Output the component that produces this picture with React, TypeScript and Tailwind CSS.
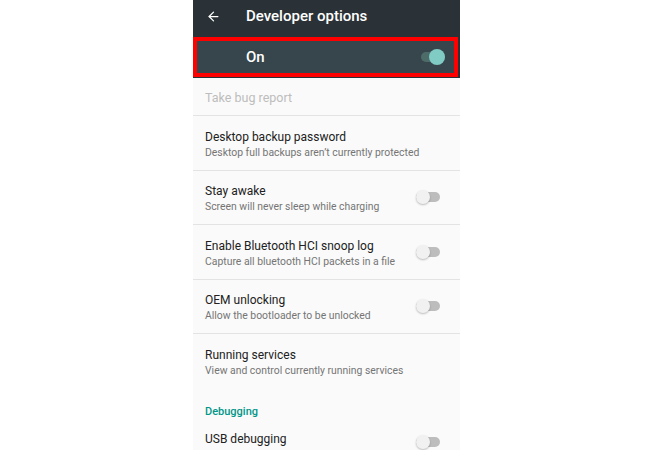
import { ArrowLeft } from "lucide-react";

type Item = {
    title: string;
    summary?: string;
    toggle?: boolean;
};

const items: Item[] = [
    { title: "Desktop backup password", summary: "Desktop full backups aren\u2019t currently protected" },
    { title: "Stay awake", summary: "Screen will never sleep while charging", toggle: true },
    { title: "Enable Bluetooth HCI snoop log", summary: "Capture all bluetooth HCI packets in a file", toggle: true },
    { title: "OEM unlocking", summary: "Allow the bootloader to be unlocked", toggle: true },
    { title: "Running services", summary: "View and control currently running services" },
];

function OffSwitch() {
    return (
        <div className="relative w-[24px] h-[14px] flex items-center">
            <div className="w-full h-[10px] rounded-full bg-[#bdbdbd]" />
            <div className="absolute left-0 top-0 w-[14px] h-[14px] rounded-full bg-[#f1f1f1] shadow-[0_1px_2px_rgba(0,0,0,0.25)]" />
        </div>
    );
}

export default function App() {
    return (
        <div className="w-[650px] h-[450px] bg-white flex overflow-hidden" style={{ fontFamily: "Roboto, 'Liberation Sans', sans-serif" }}>
            <div className="w-[267px] h-full bg-[#fafafa] ml-[193px] flex flex-col">
                {/* Toolbar */}
                <div className="h-[37px] bg-[#2a3237] flex items-center pb-[4px] shrink-0">
                    <ArrowLeft size={15} strokeWidth={2} className="text-white ml-[13px]" />
                    <span className="ml-[25px] text-white text-[15px] font-medium">Developer options</span>
                </div>

                {/* Master switch */}
                <div className="h-[41px] bg-[#2a3237] shrink-0 flex">
                    <div className="w-[265px] h-[40px] border-[4px] border-[#ff0000] bg-[#37464c] flex items-center">
                        <span className="ml-[49px] text-white text-[15px] font-medium">On</span>
                        <div className="ml-auto mr-[9px] relative w-[24px] h-[16px] flex items-center">
                            <div className="w-full h-[10px] rounded-full bg-[#4d6b69]" />
                            <div className="absolute right-0 top-0 w-[16px] h-[16px] rounded-full bg-[#80cbc4]" />
                        </div>
                    </div>
                </div>

                {/* List */}
                <div className="h-[38px] flex items-center px-[12px] pt-[3px] border-b border-[#e3e3e3] shrink-0">
                    <span className="text-[12.5px] text-[#bdbdbd]">Take bug report</span>
                </div>
                {items.map((it, i) => (
                    <div
                        key={it.title}
                        className={`h-[54.5px] flex items-center px-[12px] pt-[3px] shrink-0 ${i < items.length - 1 ? "border-b border-[#e3e3e3]" : ""}`}
                    >
                        <div className="flex-1 flex flex-col leading-none">
                            <span className="text-[12px] text-[#212121]">{it.title}</span>
                            <span className="text-[10.4px] text-[#757575] mt-[5px]">{it.summary}</span>
                        </div>
                        {it.toggle && (
                            <div className="mr-[8px] mt-[-3px]">
                                <OffSwitch />
                            </div>
                        )}
                    </div>
                ))}

                <div className="pt-[9px] px-[12px] shrink-0">
                    <span className="text-[11px] font-medium text-[#009688]">Debugging</span>
                </div>
                <div className="flex items-start pt-[11px] px-[12px] shrink-0">
                    <div className="flex-1 flex flex-col leading-none">
                        <span className="text-[12px] text-[#212121]">USB debugging</span>
                        <span className="text-[10.4px] text-[#757575] mt-[5px]">Debug mode when USB is connected</span>
                    </div>
                    <div className="mr-[8px] mt-[2px]">
                        <OffSwitch />
                    </div>
                </div>
            </div>
        </div>
    );
}
